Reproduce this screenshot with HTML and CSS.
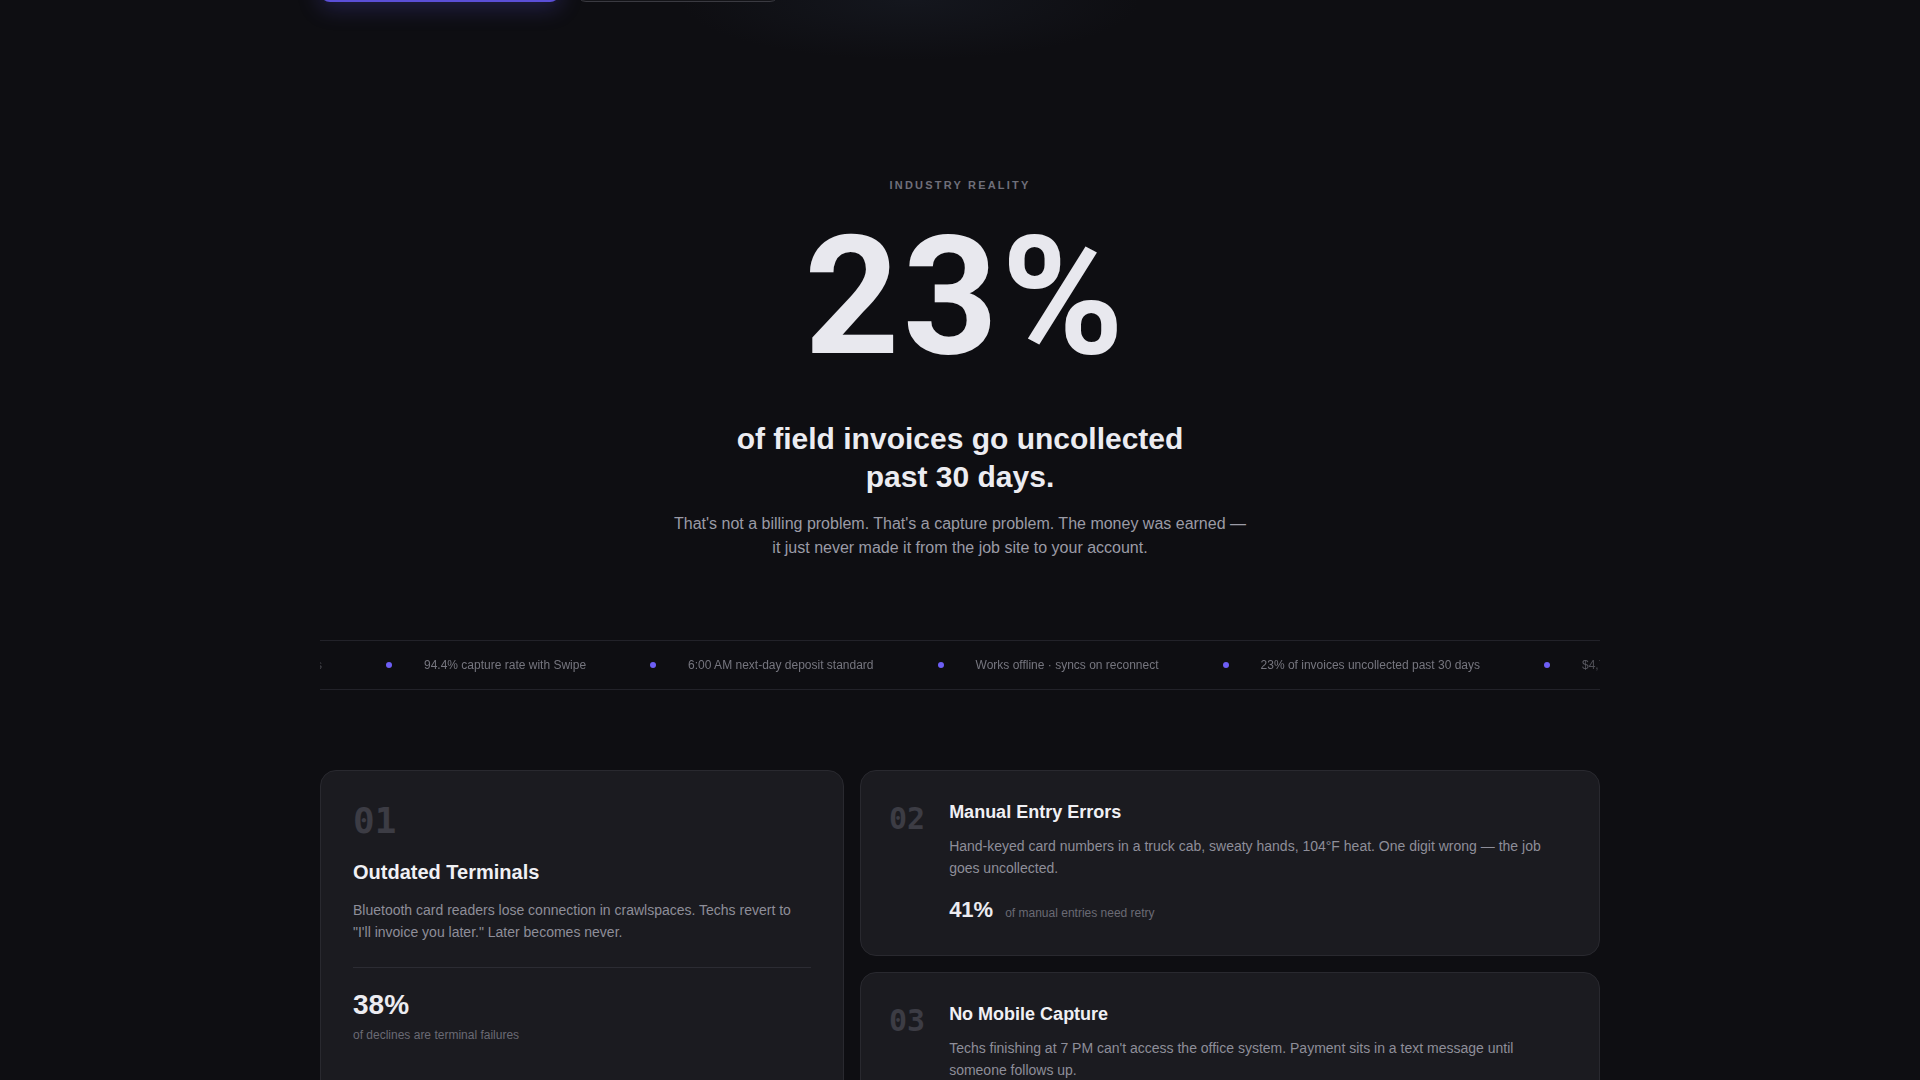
FILE: index.html
```html
<!DOCTYPE html>
<html lang="en">
<head>
<meta charset="utf-8">
<title>Swipe — Why field invoices go uncollected</title>
<link rel="stylesheet" href="styles.css">
</head>
<body>
  <div class="hero-tail">
    <div class="container hero-actions">
      <a class="btn btn-primary" href="#">Start capturing payments</a>
      <a class="btn btn-secondary" href="#">See how it works</a>
    </div>
  </div>

  <section class="reality">
    <div class="container reality-copy">
      <p class="eyebrow">Industry reality</p>
      <h2 class="big-stat">23%</h2>
      <p class="headline">of field invoices go uncollected past 30 days.</p>
      <p class="lede">That's not a billing problem. That's a capture problem. The money was earned — it just never made it from the job site to your account.</p>
    </div>

    <div class="container">
      <div class="ticker">
        <div class="ticker-viewport">
          <div class="ticker-track">
            <div class="ticker-lead">
              <span class="ticker-item"><i class="dot"></i>$4,700 recovered per tech in 90 days</span>
            </div>
            <span class="ticker-item"><i class="dot"></i>94.4% capture rate with Swipe</span>
            <span class="ticker-item"><i class="dot"></i>6:00 AM next-day deposit standard</span>
            <span class="ticker-item"><i class="dot"></i>Works offline · syncs on reconnect</span>
            <span class="ticker-item"><i class="dot"></i>23% of invoices uncollected past 30 days</span>
            <span class="ticker-item"><i class="dot"></i>$4,700 recovered per tech in 90 days</span>
          </div>
        </div>
      </div>
    </div>
  </section>

  <section class="problems">
    <div class="container problem-grid">
      <article class="card card-feature">
        <div class="num num-lg">01</div>
        <h3 class="card-title card-title-lg">Outdated Terminals</h3>
        <p class="card-desc">Bluetooth card readers lose connection in crawlspaces. Techs revert to "I'll invoice you later." Later becomes never.</p>
        <div class="feature-stat">
          <div class="stat-value stat-value-lg">38%</div>
          <div class="stat-label">of declines are terminal failures</div>
        </div>
      </article>

      <article class="card card-row">
        <div class="num">02</div>
        <div class="card-body">
          <h3 class="card-title">Manual Entry Errors</h3>
          <p class="card-desc">Hand-keyed card numbers in a truck cab, sweaty hands, 104°F heat. One digit wrong — the job goes uncollected.</p>
          <div class="inline-stat">
            <span class="stat-value">41%</span>
            <span class="stat-label">of manual entries need retry</span>
          </div>
        </div>
      </article>

      <article class="card card-row">
        <div class="num">03</div>
        <div class="card-body">
          <h3 class="card-title">No Mobile Capture</h3>
          <p class="card-desc">Techs finishing at 7 PM can't access the office system. Payment sits in a text message until someone follows up.</p>
          <div class="inline-stat">
            <span class="stat-value">67%</span>
            <span class="stat-label">of after-hours jobs invoiced next day</span>
          </div>
        </div>
      </article>
    </div>
  </section>
</body>
</html>
```

FILE: styles.css
```css
* {
  box-sizing: border-box;
}

html,
body {
  margin: 0;
  padding: 0;
}

body {
  background-color: #0e0e12;
  background-image: radial-gradient(ellipse 230px 60px at 910px 0, rgba(36, 44, 60, 0.28), rgba(14, 14, 18, 0) 100%);
  background-repeat: no-repeat;
  color: #ececf1;
  font-family: "Liberation Sans", Arial, Helvetica, sans-serif;
  min-height: 1080px;
}

.container {
  width: 1280px;
  margin: 0 auto;
}

/* Tail end of the hero call-to-action row */
.hero-tail {
  display: flow-root;
  height: 2px;
}

.hero-actions {
  display: flex;
  gap: 16px;
  margin-top: -46px;
}

.btn {
  display: flex;
  align-items: center;
  justify-content: center;
  height: 48px;
  border-radius: 10px;
  font-size: 15px;
  font-weight: 700;
  text-decoration: none;
}

.btn-primary {
  width: 240px;
  background: #5b4fd8;
  color: #fff;
  box-shadow: 0 6px 22px rgba(91, 79, 216, 0.28);
}

.btn-secondary {
  width: 204px;
  border: 1px solid #3a3a41;
  background: #141418;
  color: #ececf1;
}

/* Industry reality block */
.reality {
  padding-top: 174px;
}

.reality-copy {
  display: flex;
  flex-direction: column;
  align-items: center;
  text-align: center;
}

.eyebrow {
  margin: 0 0 20px;
  font-size: 11px;
  line-height: 18px;
  font-weight: 700;
  letter-spacing: 0.2em;
  text-transform: uppercase;
  color: #6f6f7a;
}

.big-stat {
  margin: 0;
  padding-left: 0.07em;
  font-family: Roboto, "Liberation Sans", Arial, sans-serif;
  font-size: 166px;
  line-height: 1;
  font-weight: 700;
  letter-spacing: 0.02em;
  color: #e8e8ee;
}

.headline {
  margin: 40px 0 0;
  max-width: 480px;
  font-size: 30px;
  line-height: 38px;
  font-weight: 700;
  color: #ececf1;
}

.lede {
  margin: 16px 0 0;
  max-width: 580px;
  font-size: 16px;
  line-height: 24px;
  color: #9b9ba6;
}

/* Scrolling proof-point ticker */
.ticker {
  margin-top: 80px;
  border-top: 1px solid #222229;
  border-bottom: 1px solid #222229;
}

.ticker-viewport {
  overflow: hidden;
  -webkit-mask-image: linear-gradient(90deg, rgba(0, 0, 0, 0.55) 0, #000 40px, #000 calc(100% - 40px), rgba(0, 0, 0, 0.55) 100%);
  mask-image: linear-gradient(90deg, rgba(0, 0, 0, 0.55) 0, #000 40px, #000 calc(100% - 40px), rgba(0, 0, 0, 0.55) 100%);
}

.ticker-track {
  display: flex;
  width: max-content;
  padding: 16px 0;
}

/* the item that has already scrolled mostly out of view on the left */
.ticker-lead {
  flex: 0 0 34px;
  min-width: 0;
  display: flex;
  justify-content: flex-end;
}

.ticker-item {
  display: flex;
  align-items: center;
  gap: 32px;
  padding: 0 32px;
  flex: none;
  white-space: nowrap;
  font-size: 12px;
  line-height: 16px;
  color: #76767f;
}

.dot {
  width: 6px;
  height: 6px;
  border-radius: 50%;
  background: #6d5ef5;
  flex: none;
}

/* Problem cards */
.problems {
  padding: 80px 0 80px;
}

.problem-grid {
  display: grid;
  grid-template-columns: 524px 1fr;
  gap: 16px;
  align-items: start;
}

.card {
  background: #1b1b20;
  border: 1px solid #29292f;
  border-radius: 16px;
}

.card-feature {
  grid-row: span 2;
  align-self: stretch;
  padding: 32px;
}

.card-row {
  display: flex;
  gap: 24px;
  padding: 30px 28px 32px;
}

.num {
  font-family: "DejaVu Sans Mono", "Liberation Mono", monospace;
  font-weight: 700;
  font-size: 30px;
  line-height: 36px;
  color: #3c3c44;
  flex: none;
}

.num-lg {
  font-size: 36px;
  line-height: 36px;
  margin-bottom: 20px;
}

.card-body {
  flex: 1;
  min-width: 0;
}

.card-title {
  margin: 0;
  font-size: 18px;
  line-height: 23px;
  font-weight: 700;
  color: #f0f0f4;
}

.card-title-lg {
  font-size: 20px;
  line-height: 26px;
}

.card-desc {
  margin: 11px 0 0;
  font-size: 14px;
  line-height: 22.4px;
  color: #8e8e99;
}

.card-feature .card-desc {
  margin-top: 14px;
}

.feature-stat {
  margin-top: 23px;
  padding-top: 20px;
  border-top: 1px solid #2c2c33;
}

.stat-value {
  font-size: 22px;
  line-height: 26px;
  font-weight: 700;
  color: #ececf1;
}

.stat-value-lg {
  font-size: 28px;
  line-height: 34px;
}

.stat-label {
  font-size: 12px;
  line-height: 18px;
  color: #6a6a74;
}

.feature-stat .stat-label {
  margin-top: 4px;
}

.inline-stat {
  display: flex;
  align-items: baseline;
  gap: 12px;
  margin-top: 17px;
}
```
